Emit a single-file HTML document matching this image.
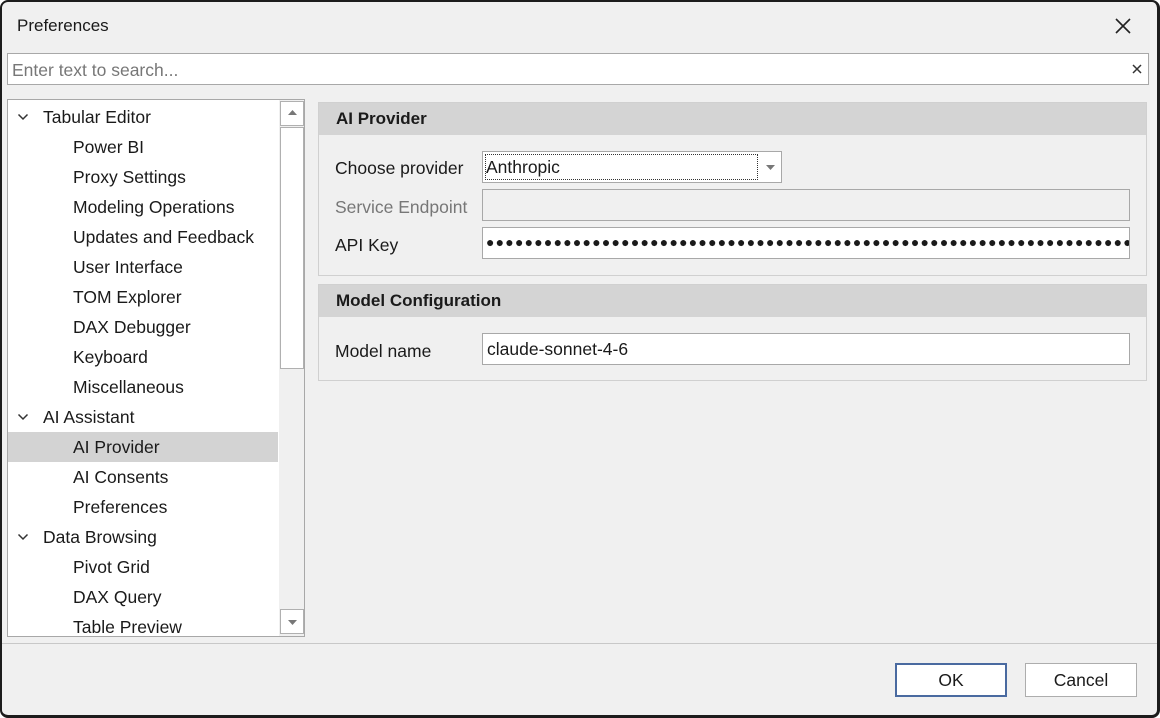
<!DOCTYPE html>
<html><head><style>
*{box-sizing:border-box;margin:0;padding:0}
body{width:1160px;height:718px;background:#fff;font-family:"Liberation Sans",sans-serif;font-size:17.5px;color:#1a1a1a;position:relative;overflow:hidden}
.win{position:absolute;left:0;top:0;width:1160px;height:718px;background:#f0f0f0;border:2px solid #1c1c1c;border-radius:8px;border-right-width:3px;border-bottom-width:3px}
.a{position:absolute}
.row{position:absolute;left:0;width:270px;height:30px;line-height:30px;white-space:nowrap}
.chev{position:absolute;left:9px;top:9px;width:12px;height:12px}
.grp{position:absolute;left:318px;width:829px;border:1px solid #d0d0d0;background:#f0f0f0}
.gh{height:32px;background:#d4d4d4;font-weight:bold;padding-left:17px;line-height:32px;font-size:17px}
.lbl{position:absolute;left:16px}
.inp{position:absolute;left:163px;width:648px;height:32px;background:#fff;border:1px solid #a8a8a8}
.btn{position:absolute;top:661px;width:112px;height:34px;background:#fff;border:1px solid #adadad;text-align:center;line-height:32px}
</style></head><body>
<div class="win">
<div class="a" style="left:15px;top:14px;font-size:17px">Preferences</div>
<svg class="a" style="left:1112px;top:15px" width="18" height="18"><path d="M2 2L16 16M16 2L2 16" stroke="#222" stroke-width="1.6"/></svg>
<div class="a" style="left:5px;top:51px;width:1142px;height:32px;background:#fff;border:1px solid #a8a8a8">
<span class="a" style="left:4px;top:6px;color:#777">Enter text to search...</span>
<svg class="a" style="left:1124px;top:10px" width="10" height="10"><path d="M1 1L9 9M9 1L1 9" stroke="#333" stroke-width="1.5"/></svg>
</div>
<div class="a" style="left:5px;top:97px;width:298px;height:538px;background:#fff;border:1px solid #a8a8a8;overflow:hidden">
<div class="a" style="left:271px;top:0;width:25px;height:536px;background:#f0f0f0"></div>
<div class="a" style="left:272px;top:1px;width:24px;height:25px;background:#fff;border:1px solid #b0b0b0"></div>
<svg class="a" style="left:280px;top:10px" width="9" height="5"><path d="M0 5L4.5 0L9 5Z" fill="#777"/></svg>
<div class="a" style="left:272px;top:27px;width:24px;height:242px;background:#fff;border:1px solid #b0b0b0"></div>
<div class="a" style="left:272px;top:509px;width:24px;height:25px;background:#fff;border:1px solid #b0b0b0"></div>
<svg class="a" style="left:280px;top:520px" width="9" height="5"><path d="M0 0L4.5 5L9 0Z" fill="#777"/></svg>
<div class="row" style="top:2px"><svg class="chev" viewBox="0 0 12 12"><path d="M1.5 3.5L6 8L10.5 3.5" stroke="#333" stroke-width="1.5" fill="none"/></svg><span style="position:absolute;left:35px">Tabular Editor</span></div>
<div class="row" style="top:32px"><span style="position:absolute;left:65px">Power BI</span></div>
<div class="row" style="top:62px"><span style="position:absolute;left:65px">Proxy Settings</span></div>
<div class="row" style="top:92px"><span style="position:absolute;left:65px">Modeling Operations</span></div>
<div class="row" style="top:122px"><span style="position:absolute;left:65px">Updates and Feedback</span></div>
<div class="row" style="top:152px"><span style="position:absolute;left:65px">User Interface</span></div>
<div class="row" style="top:182px"><span style="position:absolute;left:65px">TOM Explorer</span></div>
<div class="row" style="top:212px"><span style="position:absolute;left:65px">DAX Debugger</span></div>
<div class="row" style="top:242px"><span style="position:absolute;left:65px">Keyboard</span></div>
<div class="row" style="top:272px"><span style="position:absolute;left:65px">Miscellaneous</span></div>
<div class="row" style="top:302px"><svg class="chev" viewBox="0 0 12 12"><path d="M1.5 3.5L6 8L10.5 3.5" stroke="#333" stroke-width="1.5" fill="none"/></svg><span style="position:absolute;left:35px">AI Assistant</span></div>
<div class="row" style="top:332px;background:#d3d3d3"><span style="position:absolute;left:65px">AI Provider</span></div>
<div class="row" style="top:362px"><span style="position:absolute;left:65px">AI Consents</span></div>
<div class="row" style="top:392px"><span style="position:absolute;left:65px">Preferences</span></div>
<div class="row" style="top:422px"><svg class="chev" viewBox="0 0 12 12"><path d="M1.5 3.5L6 8L10.5 3.5" stroke="#333" stroke-width="1.5" fill="none"/></svg><span style="position:absolute;left:35px">Data Browsing</span></div>
<div class="row" style="top:452px"><span style="position:absolute;left:65px">Pivot Grid</span></div>
<div class="row" style="top:482px"><span style="position:absolute;left:65px">DAX Query</span></div>
<div class="row" style="top:512px"><span style="position:absolute;left:65px">Table Preview</span></div>
</div>

<div class="grp" style="top:100px;height:174px;left:316px">
<div class="gh">AI Provider</div>
<div class="lbl" style="top:55px">Choose provider</div>
<div class="a" style="left:163px;top:48px;width:300px;height:32px;background:#fff;border:1px solid #a8a8a8">
<div class="a" style="left:2px;top:2px;width:273px;height:26px;border:1px dotted #333"></div>
<span class="a" style="left:3px;top:5px">Anthropic</span>
<svg class="a" style="left:283px;top:13px" width="9" height="5"><path d="M0 0L4.5 5L9 0Z" fill="#777"/></svg>
</div>
<div class="lbl" style="top:94px;color:#777">Service Endpoint</div>
<div class="inp" style="top:86px;background:#f0f0f0"></div>
<div class="lbl" style="top:132px">API Key</div>
<div class="inp" style="top:124px;overflow:hidden;white-space:nowrap;font-size:14px;line-height:29px;padding-left:3px;letter-spacing:1.2px">●●●●●●●●●●●●●●●●●●●●●●●●●●●●●●●●●●●●●●●●●●●●●●●●●●●●●●●●●●●●●●●●●●●●●●</div>
</div>

<div class="grp" style="top:282px;height:97px;left:316px">
<div class="gh">Model Configuration</div>
<div class="lbl" style="top:56px">Model name</div>
<div class="inp" style="top:48px;padding-left:4px;line-height:30px">claude-sonnet-4-6</div>
</div>

<div class="a" style="left:0;top:641px;width:1155px;height:1px;background:#c8c8c8"></div>
<div class="btn" style="left:893px;border:2px solid #4a6aa0;line-height:30px">OK</div>
<div class="btn" style="left:1023px">Cancel</div>
</div>
</body></html>
